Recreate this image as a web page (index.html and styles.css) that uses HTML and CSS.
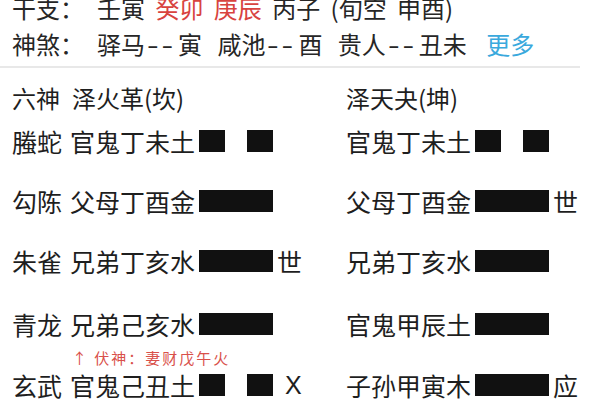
FILE: index.html
```html
<!DOCTYPE html>
<html lang="zh-CN">
<head>
<meta charset="utf-8">
<link rel="stylesheet" href="styles.css">
</head>
<body>
<div class="header">
  <div class="hline l1"><span class="key">干支：</span>壬寅 <span class="red">癸卯 庚辰</span> 丙子 (旬空 申酉)</div>
  <div class="hline l2"><span class="key">神煞：</span>驿马<span class="dash">--</span>寅 咸池<span class="dash">--</span>酉 贵人<span class="dash">--</span>丑未 <span class="more">更多</span></div>
</div>
<div class="table">
  <div class="title">
    <div class="col left"><span class="label">六神</span><span class="gua">泽火革(坎)</span></div>
    <div class="col right"><span class="gua">泽天夬(坤)</span></div>
  </div>
  <div class="row">
    <div class="col left"><span class="label">螣蛇</span><span class="yao">官鬼丁未土</span><span class="line yin"><i></i><i></i></span></div>
    <div class="col right"><span class="yao">官鬼丁未土</span><span class="line yin"><i></i><i></i></span></div>
  </div>
  <div class="row">
    <div class="col left"><span class="label">勾陈</span><span class="yao">父母丁酉金</span><span class="line yang"><i></i></span></div>
    <div class="col right"><span class="yao">父母丁酉金</span><span class="line yang"><i></i></span><span class="mark">世</span></div>
  </div>
  <div class="row">
    <div class="col left"><span class="label">朱雀</span><span class="yao">兄弟丁亥水</span><span class="line yang"><i></i></span><span class="mark">世</span></div>
    <div class="col right"><span class="yao">兄弟丁亥水</span><span class="line yang"><i></i></span></div>
  </div>
  <div class="row row-fu">
    <div class="col left"><span class="label">青龙</span><span class="yao">兄弟己亥水</span><span class="line yang"><i></i></span></div>
    <div class="col right"><span class="yao">官鬼甲辰土</span><span class="line yang"><i></i></span></div>
  </div>
  <div class="fushen">↑ 伏神：妻财戊午火</div>
  <div class="row row-last">
    <div class="col left"><span class="label">玄武</span><span class="yao">官鬼己丑土</span><span class="line yin"><i></i><i></i></span><span class="mark x">X</span></div>
    <div class="col right"><span class="yao">子孙甲寅木</span><span class="line yang"><i></i></span><span class="mark">应</span></div>
  </div>
</div>
</body>
</html>
```

FILE: styles.css
```css
html, body {
  margin: 0;
  padding: 0;
  background: #ffffff;
  overflow: hidden;
}
body {
  width: 600px;
  height: 400px;
  font-family: "Noto Sans CJK SC", "Noto Sans", sans-serif;
  color: #1e1e1e;
}
.header {
  margin-top: -10px;
  padding: 0 0 4px 12px;
  width: 568px;
  border-bottom: 2px solid #e8e8e8;
}
.hline {
  font-size: 24px;
  line-height: 36px;
  white-space: nowrap;
  color: #262626;
}
.l1 { word-spacing: 5px; }
.l2 { word-spacing: 10px; }
.key {
  display: inline-block;
  width: 85px;
}
.dash {
  display: inline-block;
  width: 33px;
  text-align: center;
  letter-spacing: 2px;
  transform: scaleX(1.4);
}
.red { color: #d8433f; }
.more { color: #3aa9dd; margin-left: 4px; }
.table {
  padding-left: 12px;
}
.title, .row {
  display: flex;
}
.title {
  margin-top: 15px;
  height: 28px;
  align-items: center;
  font-size: 24px;
}
.row {
  height: 60px;
  align-items: center;
  font-size: 25px;
}
.col {
  display: flex;
  align-items: center;
  white-space: nowrap;
}
.col.left { width: 334px; }
.label { width: 58px; }
.title .label { width: 60px; }
.line {
  display: flex;
  justify-content: space-between;
  width: 74px;
  height: 22px;
  margin-left: 4px;
}
.line i {
  display: block;
  background: #111;
  height: 22px;
}
.line.yin i { width: 26px; }
.line.yang i { width: 74px; }
.mark { margin-left: 4px; }
.mark.x { margin-left: 12px; font-family: "Liberation Sans", sans-serif; }
.row-fu {
  padding-top: 6px;
  box-sizing: border-box;
}
.fushen {
  padding-left: 60px;
  font-size: 15px;
  line-height: 14px;
  letter-spacing: 2px;
  color: #d9504a;
}
.row-last { height: 40px; }
```
